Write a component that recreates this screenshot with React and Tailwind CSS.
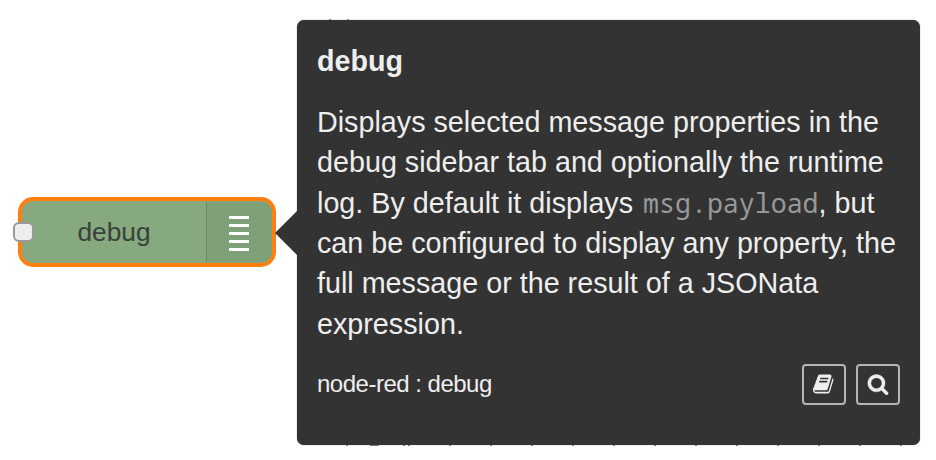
const TICKS = [347, 404, 409, 450, 491, 532, 573, 614, 655, 696, 737, 778, 819, 860, 901];

function BookIcon() {
  return (
    <svg viewBox="0 0 1792 1792" className="mb-0.5 h-[22px] w-[22px] fill-[#eee]">
      <path d="M1639 478q40 57 18 129l-275 906q-19 64-76.5 107.5t-122.5 43.5h-923q-77 0-148.5-53.5t-99.5-131.5q-24-67-2-127 0-4 3-27t4-37q1-8-3-21.5t-3-19.5q2-11 8-21t16.5-23.5 16.5-23.5q23-38 45-91.5t30-91.5q3-10 .5-30t-.5-28q3-11 17-28t17-23q21-36 42-92t25-90q1-9-2.5-32t.5-28q4-13 22-30.5t22-22.5q19-26 42.5-84.5t27.5-96.5q1-8-3-25.5t-2-26.5q2-8 9-18t18-23 17-21q8-12 16.5-30.5t15-35 16-36 19.5-32 26.5-23.5 36-11.5 47.5 5.5l-1 3q38-9 51-9h761q74 0 114 56t18 130l-274 906q-36 119-71.5 153.5t-128.5 34.5h-869q-27 0-38 15-11 16-1 43 24 70 144 70h923q29 0 56-15.5t35-41.5l300-987q7-22 5-57 38 15 59 43zm-1064 2q-4 13 2 22.5t20 9.5h608q13 0 25.5-9.5t16.5-22.5l21-64q4-13-2-22.5t-20-9.5h-608q-13 0-25.5 9.5t-16.5 22.5zm-83 256q-4 13 2 22.5t20 9.5h608q13 0 25.5-9.5t16.5-22.5l21-64q4-13-2-22.5t-20-9.5h-608q-13 0-25.5 9.5t-16.5 22.5z" />
    </svg>
  );
}

function SearchIcon() {
  return (
    <svg viewBox="0 0 1792 1792" className="mb-0.5 h-[22px] w-[22px] fill-[#eee] stroke-[#eee] stroke-[30]">
      <path d="M1216 832q0-185-131.5-316.5t-316.5-131.5-316.5 131.5-131.5 316.5 131.5 316.5 316.5 131.5 316.5-131.5 131.5-316.5zm512 832q0 52-38 90t-90 38q-54 0-90-38l-343-342q-179 124-399 124-143 0-273.5-55.5t-225-150-150-225-55.5-273.5 55.5-273.5 150-225 225-150 273.5-55.5 273.5 55.5 225 150 150 225 55.5 273.5q0 220-124 399l343 343q37 37 37 90z" />
    </svg>
  );
}

function IconButton({ label, children }) {
  return (
    <button
      aria-label={label}
      className="flex h-[41px] w-11 items-center justify-center rounded-[4px] border-2 border-[#b5b5b5]"
    >
      {children}
    </button>
  );
}

function DebugNode() {
  return (
    <div className="relative mt-[197px] ml-[18px] flex h-[70px] w-[258px] shrink-0 overflow-visible rounded-[15px] border-4 border-[#ff7f0e] bg-[#87a980]">
      <div className="absolute top-[21px] -left-[9px] h-5 w-[21px] rounded-[6px] border-2 border-[#999] bg-[#eee]" />
      <div className="flex w-[184px] items-center justify-center pt-px text-[26.3px] text-[#3a413a]">
        <span>debug</span>
      </div>
      <div className="my-px flex flex-1 flex-col items-center justify-center gap-[5px] rounded-r-[10px] border-l border-[#6f8d69] bg-[#80a07a] pt-[3px] pr-px">
        {[0, 1, 2, 3, 4].map((i) => (
          <span key={i} className="h-[3px] w-5 bg-white" />
        ))}
      </div>
    </div>
  );
}

export default function App() {
  return (
    <div className="relative flex h-[460px] w-[936px] items-start overflow-hidden bg-white font-['Liberation_Sans',Arial,sans-serif]">
      <DebugNode />
      <div className="mt-[20px] ml-[21px] h-[425px] w-[623px] shrink-0 rounded-[7px] bg-[#333] px-5 text-[#eee] shadow-[0_0_1px_#555]">
        <h1 className="pt-[21px] text-[28.7px] leading-[40px] font-bold">debug</h1>
        <p className="mt-[20.8px] text-[28.73px] leading-[40.4px] whitespace-nowrap">
          Displays selected message properties in the<br />
          debug sidebar tab and optionally the runtime<br />
          log. By default it displays{" "}
          <code className="ml-[2px] font-['Noto_Sans_Mono','DejaVu_Sans_Mono',monospace] text-[26.6px] leading-none text-[#999]">msg.payload</code>, but<br />
          can be configured to display any property, the<br />
          full message or the result of a JSONata<br />
          expression.
        </p>
        <div className="mt-[20px] flex items-center justify-between">
          <span className="pb-[2px] text-[24px] leading-[30px] tracking-[-0.5px]">node-red : debug</span>
          <div className="flex gap-[10px]">
            <IconButton label="Open help"><BookIcon /></IconButton>
            <IconButton label="Search"><SearchIcon /></IconButton>
          </div>
        </div>
      </div>
      <svg viewBox="0 0 23 46" className="absolute top-[210px] left-[275px] h-[46px] w-[23px] fill-[#333]">
        <path d="M0 23 L22 1 H23 V45 H22Z" />
      </svg>
      <svg viewBox="0 0 936 460" className="pointer-events-none absolute inset-0 h-full w-full">
        {TICKS.map((x) => (
          <rect key={x} x={x - 1} y="445" width="2" height="1" fill="#777" />
        ))}
        <rect x="370" y="445" width="9" height="1" fill="#777" />
        <rect x="329" y="19" width="2" height="1" fill="#777" />
        <rect x="347" y="19" width="2" height="1" fill="#999" />
      </svg>
    </div>
  );
}
